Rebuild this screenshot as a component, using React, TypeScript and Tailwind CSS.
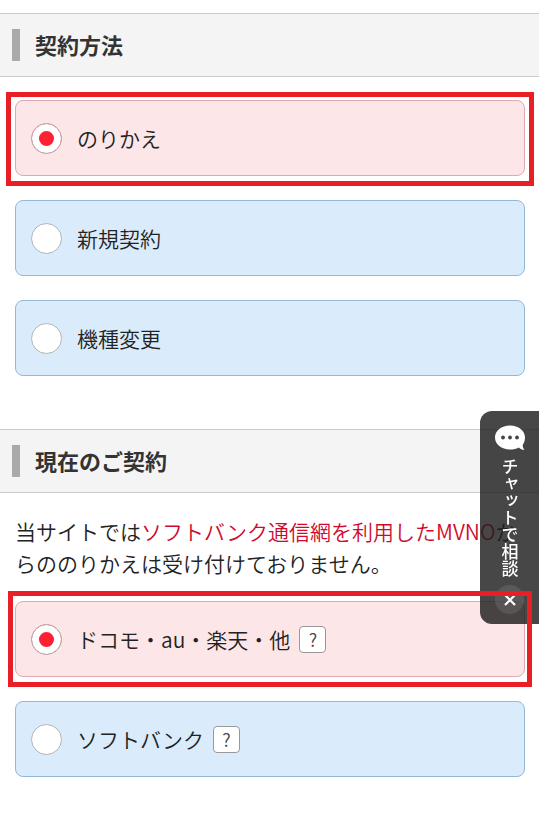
import { useState } from "react";

type Option = {
  value: string;
  label: string;
  help?: boolean;
};

const contractTypes: Option[] = [
  { value: "mnp", label: "のりかえ" },
  { value: "new", label: "新規契約" },
  { value: "change", label: "機種変更" },
];

const carriers: Option[] = [
  { value: "other", label: "ドコモ・au・楽天・他", help: true },
  { value: "softbank", label: "ソフトバンク", help: true },
];

function SectionHeading({ children }: { children: string }) {
  return (
    <div className="flex items-center gap-[15px] border-y border-[#cacaca] bg-[#f4f4f4] px-3 py-[15px]">
      <span className="h-8 w-2 bg-[#a9a9a9]" />
      <h2 className="pb-0.5 text-[22px] leading-7 font-bold text-[#333]">{children}</h2>
    </div>
  );
}

type OptionCardProps = {
  option: Option;
  name: string;
  checked: boolean;
  onSelect: (value: string) => void;
  frame: string;
};

function OptionCard({ option, name, checked, onSelect, frame }: OptionCardProps) {
  const id = `${name}-${option.value}`;
  return (
    <div
      className={`relative flex items-center rounded-lg border px-[15px] ${
        checked ? "border-[#dfa9b1] bg-[#fce6e8]" : "border-[#94b9d6] bg-[#daecfb]"
      }`}
    >
      <input
        type="radio"
        id={id}
        name={name}
        checked={checked}
        onChange={() => onSelect(option.value)}
        className="size-[31px] shrink-0 appearance-none rounded-full border border-[#b4b4b4] bg-white checked:bg-[#fd2231] checked:shadow-[inset_0_0_0_7px_white]"
      />
      <label htmlFor={id} className="pt-[21px] pb-[21px] pl-[15px] leading-8 font-[350]">
        {option.label}
      </label>
      {option.help && (
        <button
          type="button"
          className="ml-[9px] size-[27px] rounded border border-[#999] bg-white text-lg leading-6 font-[350] text-[#444]"
        >
          ?
        </button>
      )}
      {checked && (
        <span className={`pointer-events-none absolute z-20 border-5 border-[#e81f27] ${frame}`} />
      )}
    </div>
  );
}

function ChatTab({ onClose }: { onClose: () => void }) {
  return (
    <aside className="fixed top-[411px] right-0 z-10 flex w-[59px] flex-col items-center rounded-l-xl bg-[#1e1e1e]/82 pt-[13px] pb-[10px] text-white">
      <button type="button" className="flex flex-col items-center gap-[6px]">
        <svg viewBox="0 0 32 28" className="h-7 w-8" aria-hidden="true">
          <path
            fill="#fff"
            d="M16 1.500C7.500 1.500 1 6.800 1 13.500s6.500 12 15 12c3.500 0 6.300-.7 8.800-2.100 1.500 1.500 3.300 2.400 5.700 2.600-1.100-1.600-1.900-3.200-1.800-5.100C30.200 19 31 16.300 31 13.500 31 6.800 24.500 1.500 16 1.500z"
          />
          <circle cx="9" cy="13.500" r="1.900" fill="#444" />
          <circle cx="16" cy="13.500" r="1.900" fill="#444" />
          <circle cx="23" cy="13.500" r="1.900" fill="#444" />
        </svg>
        <span className="text-[17px] leading-6 font-medium [writing-mode:vertical-rl]">
          チャットで相談
        </span>
      </button>
      <button
        type="button"
        onClick={onClose}
        aria-label="閉じる"
        className="mt-2 flex size-[29px] items-center justify-center rounded-full bg-white/10"
      >
        <svg viewBox="0 0 12 12" className="size-3" aria-hidden="true">
          <path d="M1 1l10 10M11 1L1 11" stroke="#fff" strokeWidth="2.200" />
        </svg>
      </button>
    </aside>
  );
}

export default function App() {
  const [contract, setContract] = useState("mnp");
  const [carrier, setCarrier] = useState("other");
  const [chatOpen, setChatOpen] = useState(true);

  return (
    <main className="bg-white pt-[13px] pb-10 font-['Noto_Sans_CJK_JP',sans-serif] text-[21px] text-[#222]">
      <section>
        <SectionHeading>契約方法</SectionHeading>
        <div className="flex flex-col gap-6 pt-[23px] pr-[14px] pl-[15px]">
          {contractTypes.map((option) => (
            <OptionCard
              key={option.value}
              option={option}
              name="contract"
              checked={contract === option.value}
              onSelect={setContract}
              frame="-inset-x-[10px] -top-[9px] -bottom-[11px]"
            />
          ))}
        </div>
      </section>

      <section className="mt-[53px]">
        <SectionHeading>現在のご契約</SectionHeading>
        <p className="pt-[22px] pr-[14px] pl-[15px] leading-8 font-[350]">
          当サイトでは
          <span className="text-[#cf0a2c]">ソフトバンク通信網を利用したMVNO</span>
          からののりかえは受け付けておりません。
        </p>
        <div className="flex flex-col gap-6 pt-[22px] pr-[14px] pl-[15px]">
          {carriers.map((option) => (
            <OptionCard
              key={option.value}
              option={option}
              name="carrier"
              checked={carrier === option.value}
              onSelect={setCarrier}
              frame="-inset-x-2 -inset-y-[11px]"
            />
          ))}
        </div>
      </section>

      {chatOpen && <ChatTab onClose={() => setChatOpen(false)} />}
    </main>
  );
}
